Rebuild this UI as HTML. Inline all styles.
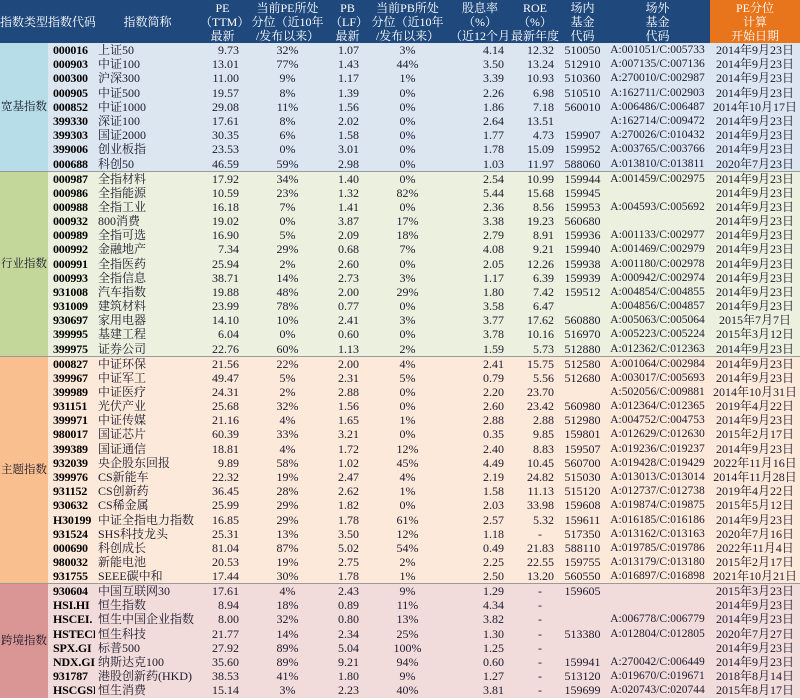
<!DOCTYPE html>
<html><head><meta charset="utf-8"><style>
*{margin:0;padding:0;box-sizing:border-box}
body{width:800px;height:700px;overflow:hidden;background:#fff;font-family:"Liberation Serif","Noto Serif CJK SC",serif;font-size:12px;color:#1a1a2e}
table{border-collapse:collapse;table-layout:fixed;width:800px}
th{background:#1f497d;color:#fff;font-weight:normal;font-size:12px;line-height:14px;height:43px;text-align:center;vertical-align:middle;padding:0;white-space:nowrap;overflow:hidden}
th.o{background:#e8741c}
td{height:14.2px;line-height:14px;padding:0;white-space:nowrap;overflow:hidden;font-size:12px}
td.t{text-align:center;font-size:11.5px}
td.c{font-weight:600;padding-left:5px;font-size:12px;color:#000;letter-spacing:-0.2px}
td.n{padding-left:3px}
td.r{text-align:right;padding-right:6px}
td.m{text-align:center}
td.f{font-size:11.5px}
tr.g1 td{background:#dce6f1}tr.g1 td.t{background:#b7dde8}
tr.g2 td{background:#ebf1de}tr.g2 td.t{background:#c4d79b}
tr.g3 td{background:#fde9d9}tr.g3 td.t{background:#fabf8f}
tr.g4 td{background:#f2dcdb}tr.g4 td.t{background:#da9694}
tr.s td{border-top:1px solid #9a9a9a}
</style></head><body>
<table>
<colgroup><col style="width:48px"><col style="width:47px"><col style="width:105px"><col style="width:45px"><col style="width:85px"><col style="width:35px"><col style="width:85px"><col style="width:60px"><col style="width:50px"><col style="width:45px"><col style="width:105px"><col style="width:90px"></colgroup>
<tr><th>指数类型</th><th>指数代码</th><th>指数简称</th><th>PE<br>（TTM）<br>最新</th><th>当前PE所处<br>分位（近10年<br>/发布以来）</th><th>PB<br>（LF）<br>最新</th><th>当前PB所处<br>分位（近10年<br>/发布以来）</th><th>股息率<br>（%）<br>（近12个月）</th><th>ROE<br>（%）<br>最新年度</th><th>场内<br>基金<br>代码</th><th>场外<br>基金<br>代码</th><th class="o">PE分位<br>计算<br>开始日期</th></tr>
<tr class="g1"><td class="t" rowspan="9">宽基指数</td><td class="c">000016</td><td class="n">上证50</td><td class="r">9.73</td><td class="m">32%</td><td class="r">1.07</td><td class="m">3%</td><td class="r">4.14</td><td class="r">12.32</td><td class="m">510050</td><td class="m f">A:001051/C:005733</td><td class="m">2014年9月23日</td></tr>
<tr class="g1"><td class="c">000903</td><td class="n">中证100</td><td class="r">13.01</td><td class="m">77%</td><td class="r">1.43</td><td class="m">44%</td><td class="r">3.50</td><td class="r">13.24</td><td class="m">512910</td><td class="m f">A:007135/C:007136</td><td class="m">2014年9月23日</td></tr>
<tr class="g1"><td class="c">000300</td><td class="n">沪深300</td><td class="r">11.00</td><td class="m">9%</td><td class="r">1.17</td><td class="m">1%</td><td class="r">3.39</td><td class="r">10.93</td><td class="m">510360</td><td class="m f">A:270010/C:002987</td><td class="m">2014年9月23日</td></tr>
<tr class="g1"><td class="c">000905</td><td class="n">中证500</td><td class="r">19.57</td><td class="m">8%</td><td class="r">1.39</td><td class="m">0%</td><td class="r">2.26</td><td class="r">6.98</td><td class="m">510510</td><td class="m f">A:162711/C:002903</td><td class="m">2014年9月23日</td></tr>
<tr class="g1"><td class="c">000852</td><td class="n">中证1000</td><td class="r">29.08</td><td class="m">11%</td><td class="r">1.56</td><td class="m">0%</td><td class="r">1.86</td><td class="r">7.18</td><td class="m">560010</td><td class="m f">A:006486/C:006487</td><td class="m">2014年10月17日</td></tr>
<tr class="g1"><td class="c">399330</td><td class="n">深证100</td><td class="r">17.61</td><td class="m">8%</td><td class="r">2.02</td><td class="m">0%</td><td class="r">2.64</td><td class="r">13.51</td><td class="m"></td><td class="m f">A:162714/C:009472</td><td class="m">2014年9月23日</td></tr>
<tr class="g1"><td class="c">399303</td><td class="n">国证2000</td><td class="r">30.35</td><td class="m">6%</td><td class="r">1.58</td><td class="m">0%</td><td class="r">1.77</td><td class="r">4.73</td><td class="m">159907</td><td class="m f">A:270026/C:010432</td><td class="m">2014年9月23日</td></tr>
<tr class="g1"><td class="c">399006</td><td class="n">创业板指</td><td class="r">23.53</td><td class="m">0%</td><td class="r">3.01</td><td class="m">0%</td><td class="r">1.78</td><td class="r">15.09</td><td class="m">159952</td><td class="m f">A:003765/C:003766</td><td class="m">2014年9月23日</td></tr>
<tr class="g1"><td class="c">000688</td><td class="n">科创50</td><td class="r">46.59</td><td class="m">59%</td><td class="r">2.98</td><td class="m">0%</td><td class="r">1.03</td><td class="r">11.97</td><td class="m">588060</td><td class="m f">A:013810/C:013811</td><td class="m">2020年7月23日</td></tr>
<tr class="g2 s"><td class="t" rowspan="13">行业指数</td><td class="c">000987</td><td class="n">全指材料</td><td class="r">17.92</td><td class="m">34%</td><td class="r">1.40</td><td class="m">0%</td><td class="r">2.54</td><td class="r">10.99</td><td class="m">159944</td><td class="m f">A:001459/C:002975</td><td class="m">2014年9月23日</td></tr>
<tr class="g2"><td class="c">000986</td><td class="n">全指能源</td><td class="r">10.59</td><td class="m">23%</td><td class="r">1.32</td><td class="m">82%</td><td class="r">5.44</td><td class="r">15.68</td><td class="m">159945</td><td class="m f"></td><td class="m">2014年9月23日</td></tr>
<tr class="g2"><td class="c">000988</td><td class="n">全指工业</td><td class="r">16.18</td><td class="m">7%</td><td class="r">1.41</td><td class="m">0%</td><td class="r">2.36</td><td class="r">8.56</td><td class="m">159953</td><td class="m f">A:004593/C:005692</td><td class="m">2014年9月23日</td></tr>
<tr class="g2"><td class="c">000932</td><td class="n">800消费</td><td class="r">19.02</td><td class="m">0%</td><td class="r">3.87</td><td class="m">17%</td><td class="r">3.38</td><td class="r">19.23</td><td class="m">560680</td><td class="m f"></td><td class="m">2014年9月23日</td></tr>
<tr class="g2"><td class="c">000989</td><td class="n">全指可选</td><td class="r">16.90</td><td class="m">5%</td><td class="r">2.09</td><td class="m">18%</td><td class="r">2.79</td><td class="r">8.91</td><td class="m">159936</td><td class="m f">A:001133/C:002977</td><td class="m">2014年9月23日</td></tr>
<tr class="g2"><td class="c">000992</td><td class="n">金融地产</td><td class="r">7.34</td><td class="m">29%</td><td class="r">0.68</td><td class="m">7%</td><td class="r">4.08</td><td class="r">9.21</td><td class="m">159940</td><td class="m f">A:001469/C:002979</td><td class="m">2014年9月23日</td></tr>
<tr class="g2"><td class="c">000991</td><td class="n">全指医药</td><td class="r">25.94</td><td class="m">2%</td><td class="r">2.60</td><td class="m">0%</td><td class="r">2.05</td><td class="r">12.26</td><td class="m">159938</td><td class="m f">A:001180/C:002978</td><td class="m">2014年9月23日</td></tr>
<tr class="g2"><td class="c">000993</td><td class="n">全指信息</td><td class="r">38.71</td><td class="m">14%</td><td class="r">2.73</td><td class="m">3%</td><td class="r">1.17</td><td class="r">6.39</td><td class="m">159939</td><td class="m f">A:000942/C:002974</td><td class="m">2014年9月23日</td></tr>
<tr class="g2"><td class="c">931008</td><td class="n">汽车指数</td><td class="r">19.88</td><td class="m">48%</td><td class="r">2.00</td><td class="m">29%</td><td class="r">1.80</td><td class="r">7.42</td><td class="m">159512</td><td class="m f">A:004854/C:004855</td><td class="m">2014年9月23日</td></tr>
<tr class="g2"><td class="c">931009</td><td class="n">建筑材料</td><td class="r">23.99</td><td class="m">78%</td><td class="r">0.77</td><td class="m">0%</td><td class="r">3.58</td><td class="r">6.47</td><td class="m"></td><td class="m f">A:004856/C:004857</td><td class="m">2014年9月23日</td></tr>
<tr class="g2"><td class="c">930697</td><td class="n">家用电器</td><td class="r">14.10</td><td class="m">10%</td><td class="r">2.41</td><td class="m">3%</td><td class="r">3.77</td><td class="r">17.62</td><td class="m">560880</td><td class="m f">A:005063/C:005064</td><td class="m">2015年7月7日</td></tr>
<tr class="g2"><td class="c">399995</td><td class="n">基建工程</td><td class="r">6.04</td><td class="m">0%</td><td class="r">0.60</td><td class="m">0%</td><td class="r">3.78</td><td class="r">10.16</td><td class="m">516970</td><td class="m f">A:005223/C:005224</td><td class="m">2015年3月12日</td></tr>
<tr class="g2"><td class="c">399975</td><td class="n">证券公司</td><td class="r">22.76</td><td class="m">60%</td><td class="r">1.13</td><td class="m">2%</td><td class="r">1.59</td><td class="r">5.73</td><td class="m">512880</td><td class="m f">A:012362/C:012363</td><td class="m">2014年9月23日</td></tr>
<tr class="g3 s"><td class="t" rowspan="16">主题指数</td><td class="c">000827</td><td class="n">中证环保</td><td class="r">21.56</td><td class="m">22%</td><td class="r">2.00</td><td class="m">4%</td><td class="r">2.41</td><td class="r">15.75</td><td class="m">512580</td><td class="m f">A:001064/C:002984</td><td class="m">2014年9月23日</td></tr>
<tr class="g3"><td class="c">399967</td><td class="n">中证军工</td><td class="r">49.47</td><td class="m">5%</td><td class="r">2.31</td><td class="m">5%</td><td class="r">0.79</td><td class="r">5.56</td><td class="m">512680</td><td class="m f">A:003017/C:005693</td><td class="m">2014年9月23日</td></tr>
<tr class="g3"><td class="c">399989</td><td class="n">中证医疗</td><td class="r">24.31</td><td class="m">2%</td><td class="r">2.88</td><td class="m">0%</td><td class="r">2.20</td><td class="r">23.70</td><td class="m"></td><td class="m f">A:502056/C:009881</td><td class="m">2014年10月31日</td></tr>
<tr class="g3"><td class="c">931151</td><td class="n">光伏产业</td><td class="r">25.68</td><td class="m">32%</td><td class="r">1.56</td><td class="m">0%</td><td class="r">2.60</td><td class="r">23.42</td><td class="m">560980</td><td class="m f">A:012364/C:012365</td><td class="m">2019年4月22日</td></tr>
<tr class="g3"><td class="c">399971</td><td class="n">中证传媒</td><td class="r">21.16</td><td class="m">4%</td><td class="r">1.65</td><td class="m">1%</td><td class="r">2.88</td><td class="r">2.88</td><td class="m">512980</td><td class="m f">A:004752/C:004753</td><td class="m">2014年9月23日</td></tr>
<tr class="g3"><td class="c">980017</td><td class="n">国证芯片</td><td class="r">60.39</td><td class="m">33%</td><td class="r">3.21</td><td class="m">0%</td><td class="r">0.35</td><td class="r">9.85</td><td class="m">159801</td><td class="m f">A:012629/C:012630</td><td class="m">2015年2月17日</td></tr>
<tr class="g3"><td class="c">399389</td><td class="n">国证通信</td><td class="r">18.81</td><td class="m">4%</td><td class="r">1.72</td><td class="m">12%</td><td class="r">2.40</td><td class="r">8.83</td><td class="m">159507</td><td class="m f">A:019236/C:019237</td><td class="m">2014年9月23日</td></tr>
<tr class="g3"><td class="c">932039</td><td class="n">央企股东回报</td><td class="r">9.89</td><td class="m">58%</td><td class="r">1.02</td><td class="m">45%</td><td class="r">4.49</td><td class="r">10.45</td><td class="m">560700</td><td class="m f">A:019428/C:019429</td><td class="m">2022年11月16日</td></tr>
<tr class="g3"><td class="c">399976</td><td class="n">CS新能车</td><td class="r">22.32</td><td class="m">19%</td><td class="r">2.47</td><td class="m">4%</td><td class="r">2.19</td><td class="r">24.82</td><td class="m">515030</td><td class="m f">A:013013/C:013014</td><td class="m">2014年11月28日</td></tr>
<tr class="g3"><td class="c">931152</td><td class="n">CS创新药</td><td class="r">36.45</td><td class="m">28%</td><td class="r">2.62</td><td class="m">1%</td><td class="r">1.58</td><td class="r">11.13</td><td class="m">515120</td><td class="m f">A:012737/C:012738</td><td class="m">2019年4月22日</td></tr>
<tr class="g3"><td class="c">930632</td><td class="n">CS稀金属</td><td class="r">25.99</td><td class="m">29%</td><td class="r">1.82</td><td class="m">0%</td><td class="r">2.03</td><td class="r">33.98</td><td class="m">159608</td><td class="m f">A:019874/C:019875</td><td class="m">2015年5月12日</td></tr>
<tr class="g3"><td class="c">H30199</td><td class="n">中证全指电力指数</td><td class="r">16.85</td><td class="m">29%</td><td class="r">1.78</td><td class="m">61%</td><td class="r">2.57</td><td class="r">5.32</td><td class="m">159611</td><td class="m f">A:016185/C:016186</td><td class="m">2014年9月23日</td></tr>
<tr class="g3"><td class="c">931524</td><td class="n">SHS科技龙头</td><td class="r">25.31</td><td class="m">13%</td><td class="r">3.50</td><td class="m">12%</td><td class="r">1.18</td><td class="m" style="padding-left:10px">-</td><td class="m">517350</td><td class="m f">A:013162/C:013163</td><td class="m">2020年7月16日</td></tr>
<tr class="g3"><td class="c">000690</td><td class="n">科创成长</td><td class="r">81.04</td><td class="m">87%</td><td class="r">5.02</td><td class="m">54%</td><td class="r">0.49</td><td class="r">21.83</td><td class="m">588110</td><td class="m f">A:019785/C:019786</td><td class="m">2022年11月4日</td></tr>
<tr class="g3"><td class="c">980032</td><td class="n">新能电池</td><td class="r">20.53</td><td class="m">19%</td><td class="r">2.75</td><td class="m">2%</td><td class="r">2.25</td><td class="r">22.55</td><td class="m">159755</td><td class="m f">A:013179/C:013180</td><td class="m">2015年2月17日</td></tr>
<tr class="g3"><td class="c">931755</td><td class="n">SEEE碳中和</td><td class="r">17.44</td><td class="m">30%</td><td class="r">1.78</td><td class="m">1%</td><td class="r">2.50</td><td class="r">13.20</td><td class="m">560550</td><td class="m f">A:016897/C:016898</td><td class="m">2021年10月21日</td></tr>
<tr class="g4 s"><td class="t" rowspan="8">跨境指数</td><td class="c">930604</td><td class="n">中国互联网30</td><td class="r">17.61</td><td class="m">4%</td><td class="r">2.43</td><td class="m">9%</td><td class="r">1.29</td><td class="m" style="padding-left:10px">-</td><td class="m">159605</td><td class="m f"></td><td class="m">2015年3月23日</td></tr>
<tr class="g4"><td class="c">HSI.HI</td><td class="n">恒生指数</td><td class="r">8.94</td><td class="m">18%</td><td class="r">0.89</td><td class="m">11%</td><td class="r">4.34</td><td class="m" style="padding-left:10px">-</td><td class="m"></td><td class="m f"></td><td class="m">2014年9月23日</td></tr>
<tr class="g4"><td class="c">HSCEI.</td><td class="n">恒生中国企业指数</td><td class="r">8.00</td><td class="m">32%</td><td class="r">0.80</td><td class="m">13%</td><td class="r">3.82</td><td class="m" style="padding-left:10px">-</td><td class="m"></td><td class="m f">A:006778/C:006779</td><td class="m">2014年9月23日</td></tr>
<tr class="g4"><td class="c">HSTECH</td><td class="n">恒生科技</td><td class="r">21.77</td><td class="m">14%</td><td class="r">2.34</td><td class="m">25%</td><td class="r">1.30</td><td class="m" style="padding-left:10px">-</td><td class="m">513380</td><td class="m f">A:012804/C:012805</td><td class="m">2020年7月27日</td></tr>
<tr class="g4"><td class="c">SPX.GI</td><td class="n">标普500</td><td class="r">27.92</td><td class="m">89%</td><td class="r">5.04</td><td class="m">100%</td><td class="r">1.25</td><td class="m" style="padding-left:10px">-</td><td class="m"></td><td class="m f"></td><td class="m">2014年9月23日</td></tr>
<tr class="g4"><td class="c">NDX.GI</td><td class="n">纳斯达克100</td><td class="r">35.60</td><td class="m">89%</td><td class="r">9.21</td><td class="m">94%</td><td class="r">0.60</td><td class="m" style="padding-left:10px">-</td><td class="m">159941</td><td class="m f">A:270042/C:006449</td><td class="m">2014年9月23日</td></tr>
<tr class="g4"><td class="c">931787</td><td class="n">港股创新药(HKD)</td><td class="r">38.53</td><td class="m">41%</td><td class="r">1.80</td><td class="m">9%</td><td class="r">1.27</td><td class="m" style="padding-left:10px">-</td><td class="m">513120</td><td class="m f">A:019670/C:019671</td><td class="m">2018年8月14日</td></tr>
<tr class="g4"><td class="c">HSCGSI</td><td class="n">恒生消费</td><td class="r">15.14</td><td class="m">3%</td><td class="r">2.23</td><td class="m">40%</td><td class="r">3.81</td><td class="m" style="padding-left:10px">-</td><td class="m">159699</td><td class="m f">A:020743/C:020744</td><td class="m">2015年8月17日</td></tr>
</table>
</body></html>
